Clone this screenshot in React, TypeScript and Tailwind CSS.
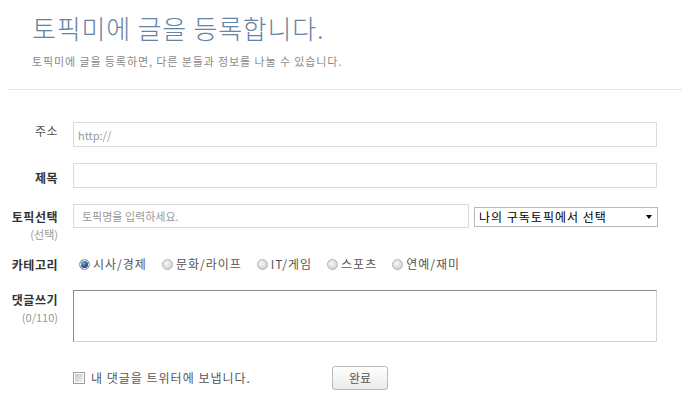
import React from "react";

const CATEGORIES = ["시사/경제", "문화/라이프", "IT/게임", "스포츠", "연예/재미"];

const FONT = "font-['Noto_Sans_CJK_KR','Noto_Sans',sans-serif]";

function Radio({ checked }: { checked?: boolean }) {
  if (checked) {
    return (
      <span className="inline-block w-[11px] h-[11px] rounded-full border border-[#8b98a6] shadow-[inset_0_0_0_1px_#ffffff] bg-[radial-gradient(circle_at_40%_38%,#8fb3da_0%,#2a5a92_40%,#163660_75%,#ffffff_76%)] shrink-0" />
    );
  }
  return (
    <span className="inline-block w-[11px] h-[11px] rounded-full border border-[#b3b3b3] bg-[radial-gradient(circle_at_40%_38%,#f7f7f7_0%,#dcdcdc_55%,#c4c4c4_100%)] shrink-0" />
  );
}

function Label({ text, sub, light }: { text: string; sub?: string; light?: boolean }) {
  return (
    <div className="w-[58px] shrink-0 text-right">
      <div
        className={
          light
            ? "text-[12px] leading-[16px] text-[#555] font-normal tracking-[0.5px]"
            : "text-[12px] leading-[16px] text-[#333] font-bold tracking-[0.5px]"
        }
      >
        {text}
      </div>
      {sub && <div className="mt-[2px] text-[11px] leading-[14px] text-[#999]">{sub}</div>}
    </div>
  );
}

export default function App() {
  return (
    <div className={`w-[682px] h-[420px] bg-white overflow-hidden ${FONT}`}>
      {/* header */}
      <div className="pl-8 pt-[13px]">
        <h1 className="text-[26px] leading-[30px] font-light text-[#6583a5] tracking-[0.8px]">
          토픽미에 글을 등록합니다.
        </h1>
        <p className="mt-[10px] text-[11px] leading-[16px] text-[#8a8a8a] tracking-[0.9px]">
          토픽미에 글을 등록하면, 다른 분들과 정보를 나눌 수 있습니다.
        </p>
      </div>
      <div className="ml-2 mt-[20px] h-px bg-[#e6e6e6]" />

      {/* form */}
      <div className="flex flex-col">
        {/* 주소 */}
        <div className="mt-[32px] flex items-start gap-[15px]">
          <div className="pt-[1px]">
            <Label text="주소" light />
          </div>
          <input
            className="w-[584px] h-[25px] border border-[#dcdcdc] px-[4px] text-[11px] text-[#666] outline-none placeholder:text-[#999]"
            placeholder="http://"
          />
        </div>

        {/* 제목 */}
        <div className="mt-[16px] flex items-start gap-[15px]">
          <div className="pt-[7px]">
            <Label text="제목" />
          </div>
          <input className="w-[584px] h-[25px] border border-[#dcdcdc] px-[4px] text-[11px] outline-none" />
        </div>

        {/* 토픽선택 */}
        <div className="mt-[16px] flex items-start gap-[15px]">
          <div className="pt-[5px]">
            <Label text="토픽선택" sub="(선택)" />
          </div>
          <div className="flex items-start gap-[5px]">
            <input
              className="w-[396px] h-[24px] border border-[#dcdcdc] px-[8px] text-[11px] outline-none placeholder:text-[#999]"
              placeholder="토픽명을 입력하세요."
            />
            <div className="mt-[3px] w-[184px] h-[20px] border border-[#b8b8b8] bg-white flex items-center justify-between pl-[4px] pr-[5px]">
              <span className="text-[12px] leading-[16px] text-black tracking-[1px]">나의 구독토픽에서 선택</span>
              <span className="w-0 h-0 border-l-[3.5px] border-r-[3.5px] border-t-[4px] border-l-transparent border-r-transparent border-t-black" />
            </div>
          </div>
        </div>

        {/* 카테고리 */}
        <div className="mt-[14px] flex items-center gap-[15px]">
          <div className="pt-[2px]">
            <Label text="카테고리" />
          </div>
          <div className="flex items-center gap-[15px] pl-[6px]">
            {CATEGORIES.map((c, i) => (
              <label key={c} className="flex items-center gap-[3px]">
                <Radio checked={i === 0} />
                <span className="text-[12px] leading-[16px] text-[#555] tracking-[1px]">{c}</span>
              </label>
            ))}
          </div>
        </div>

        {/* 댓글쓰기 */}
        <div className="mt-[17px] flex items-start gap-[15px]">
          <div className="pt-[2px]">
            <Label text="댓글쓰기" sub="(0/110)" />
          </div>
          <textarea className="w-[584px] h-[52px] resize-none border border-t-[#8a8a8a] border-l-[#8a8a8a] border-r-[#d4d4d4] border-b-[#d4d4d4] outline-none text-[12px] p-1" />
        </div>

        {/* 트위터 / 완료 */}
        <div className="mt-[24px] flex items-center pl-[73px]">
          <div className="w-[259px] flex items-center gap-[6px]">
            <span className="inline-block w-[12px] h-[12px] border border-[#9c9c9c] shadow-[inset_0_0_0_1px_#ffffff] bg-[linear-gradient(135deg,#c4c4c4,#f2f2f2)] shrink-0" />
            <span className="text-[12px] leading-[16px] text-[#555] tracking-[1px]">내 댓글을 트위터에 보냅니다.</span>
          </div>
          <button className="w-[56px] h-[24px] rounded-[3px] border border-[#bababa] bg-[linear-gradient(#ffffff,#ebebeb)] text-[12px] text-[#555]">
            완료
          </button>
        </div>
      </div>
    </div>
  );
}
